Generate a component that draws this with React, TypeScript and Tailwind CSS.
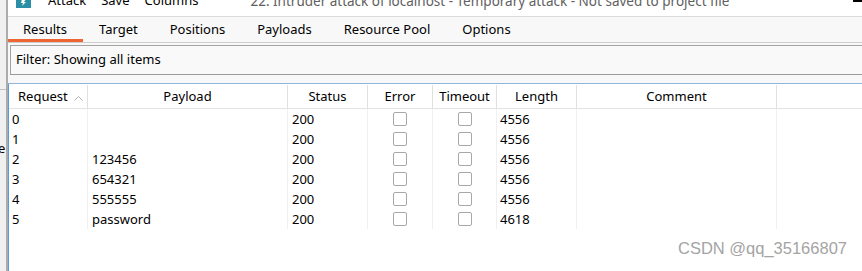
import React from 'react';

const cols = [
  { label: 'Request', w: 'w-[79px]' },
  { label: 'Payload', w: 'w-[200px]' },
  { label: 'Status', w: 'w-[80px]' },
  { label: 'Error', w: 'w-[65px]' },
  { label: 'Timeout', w: 'w-[64px]' },
  { label: 'Length', w: 'w-[80px]' },
  { label: 'Comment', w: 'w-[200px]' },
];

const rows = [
  { req: '0', payload: '', status: '200', length: '4556' },
  { req: '1', payload: '', status: '200', length: '4556' },
  { req: '2', payload: '123456', status: '200', length: '4556' },
  { req: '3', payload: '654321', status: '200', length: '4556' },
  { req: '4', payload: '555555', status: '200', length: '4556' },
  { req: '5', payload: 'password', status: '200', length: '4618' },
];

const tabs = ['Results', 'Target', 'Positions', 'Payloads', 'Resource Pool', 'Options'];

function Box() {
  return <span className="block w-[14px] h-[14px] rounded-[2px] border border-[#a8a8a8] bg-white" />;
}

export default function App() {
  return (
    <div
      className="relative flex w-[862px] h-[271px] overflow-hidden bg-white text-[13px] text-black"
      style={{ fontFamily: '"Segoe UI", "Noto Sans", sans-serif' }}
    >
      {/* window behind */}
      <div className="w-[8px] shrink-0 flex flex-col bg-[#f0f0f0] border-r-2 border-[#acacac]">
        <div className="h-[90px] border-b border-[#c4c4c4]" />
        <div className="pt-[52px] -ml-[2px] leading-none text-[13px]">e</div>
      </div>

      <div className="flex-1 flex flex-col min-w-0">
        {/* menu bar */}
        <div className="h-[17px] shrink-0 flex items-end border-b border-[#dcdcdc] bg-white">
          <div className="flex items-center h-[16px] -translate-y-[7px]">
            <span className="ml-[8px] w-[15px] h-[16px] -translate-y-[1px] bg-[#2a8fa6] flex items-end justify-center pb-[2px]">
              <svg width="8" height="8" viewBox="0 0 8 8">
                <path d="M2 1 L6 1 L4 4 L6 4 L2 8 L3 5 L1 5 Z" fill="#fff" />
              </svg>
            </span>
            <span className="ml-[17px]">Attack</span>
            <span className="ml-[15px]">Save</span>
            <span className="ml-[15px]">Columns</span>
            <span className="ml-[52px] text-[13.5px] text-[#606060] whitespace-nowrap">
              22. Intruder attack of localhost - Temporary attack - Not saved to project file
            </span>
          </div>
        </div>

        {/* tabs */}
        <div className="h-[26px] shrink-0 flex bg-[#f8f8f8] border-b border-[#cdcdcd]">
          {tabs.map((t, i) => (
            <div
              key={t}
              className={`pr-[16px] pt-[3px] leading-[18px] whitespace-nowrap ${
                i === 0 ? 'pl-[15px] border-b-[3px] border-[#ee6633]' : 'pl-[16px]'
              }`}
            >
              {t}
            </div>
          ))}
        </div>

        {/* filter */}
        <div className="h-[41px] shrink-0 bg-[#f8f8f8] pt-[2px] pl-[2px] border-b border-[#8fb4de]">
          <div className="h-[30px] border border-[#a3a3a3] border-b-[#9a9a9a] border-r-0 bg-[#f9f9f9] flex items-center pl-[5px]">
            Filter: Showing all items
          </div>
        </div>

        {/* table */}
        <div className="flex-1 border-l border-[#5a9ad8]">
          <div className="flex h-[25px] border-b border-[#e3e3e3]">
            {cols.map((c, i) => (
              <div
                key={c.label}
                className={`${c.w} shrink-0 flex items-center border-r border-[#e0e0e0] mt-[1px] pt-[1px] ${
                  i === 0 ? 'justify-start pl-[9px]' : 'justify-center'
                }`}
              >
                {c.label}
                {i === 0 && (
                  <svg className="ml-[6px] mt-[1px]" width="9" height="6" viewBox="0 0 9 6">
                    <path d="M0.5 5.5 L4.5 1.5 L8.5 5.5" fill="none" stroke="#b0b0b0" strokeWidth="1" />
                  </svg>
                )}
              </div>
            ))}
          </div>
          {rows.map((r) => (
            <div key={r.req} className="flex h-[20px] leading-[20px]">
              <div className="w-[79px] shrink-0 pl-[3px] border-r border-[#f0f0f0]">{r.req}</div>
              <div className="w-[200px] shrink-0 pl-[4px] border-r border-[#f0f0f0]">{r.payload}</div>
              <div className="w-[80px] shrink-0 pl-[4px] border-r border-[#f0f0f0]">{r.status}</div>
              <div className="w-[65px] shrink-0 flex items-center justify-center border-r border-[#f0f0f0]">
                <Box />
              </div>
              <div className="w-[64px] shrink-0 flex items-center justify-center border-r border-[#f0f0f0]">
                <Box />
              </div>
              <div className="w-[80px] shrink-0 pl-[3px] border-r border-[#f0f0f0]">{r.length}</div>
              <div className="w-[200px] shrink-0 border-r border-[#f0f0f0]" />
            </div>
          ))}
        </div>
      </div>

      <div
        className="absolute right-[15px] bottom-[15px] text-[16.5px] text-[#a4a4a4] leading-none"
        style={{ fontFamily: '"Liberation Sans", Arial, sans-serif' }}
      >
        CSDN @qq_35166807
      </div>
      <div className="absolute top-0 right-0 w-[9px] h-[2px] bg-black" />
    </div>
  );
}
